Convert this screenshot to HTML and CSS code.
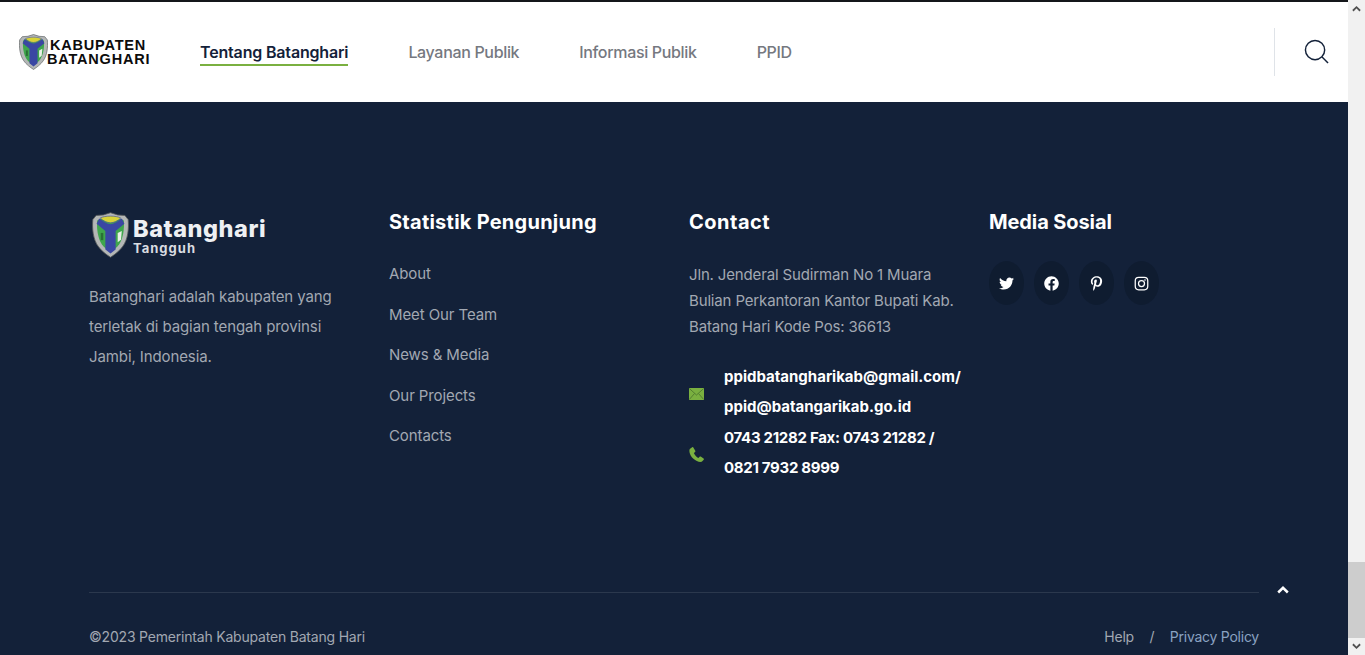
FILE: index.html
```html
<!DOCTYPE html>
<html lang="id">
<head>
<meta charset="utf-8">
<title>Kabupaten Batanghari</title>
<link rel="stylesheet" href="styles.css">
</head>
<body>
<div class="page">
  <div class="main">
    <header class="header">
      <a class="brand">
        <svg class="shield shield-sm" viewBox="0 0 36 44"><use href="#shield"/></svg>
        <span class="brand-text"><span class="b1">KABUPATEN</span><span class="b2">BATANGHARI</span></span>
      </a>
      <nav class="nav">
        <a class="nav-link active">Tentang Batanghari</a>
        <a class="nav-link">Layanan Publik</a>
        <a class="nav-link">Informasi Publik</a>
        <a class="nav-link">PPID</a>
      </nav>
      <div class="search">
        <svg viewBox="0 0 26 26" class="search-icon"><circle cx="11.5" cy="11.5" r="10" /><path d="M18.8 18.8 25 25"/></svg>
      </div>
    </header>
    <footer class="footer">
      <div class="cols">
        <div class="col">
          <div class="flogo">
            <svg class="shield shield-lg" viewBox="0 0 36 44"><use href="#shield"/></svg>
            <div class="flogo-text"><span class="f1">Batanghari</span><span class="f2">Tangguh</span></div>
          </div>
          <p class="about">Batanghari adalah kabupaten yang terletak di bagian tengah provinsi Jambi, Indonesia.</p>
        </div>
        <div class="col">
          <h3 class="title title-wide">Statistik Pengunjung</h3>
          <ul class="links">
            <li>About</li>
            <li>Meet Our Team</li>
            <li>News &amp; Media</li>
            <li>Our Projects</li>
            <li>Contacts</li>
          </ul>
        </div>
        <div class="col">
          <h3 class="title title-contact">Contact</h3>
          <p class="address">Jln. Jenderal Sudirman No 1 Muara Bulian Perkantoran Kantor Bupati Kab. Batang Hari Kode Pos: 36613</p>
          <div class="contact-row">
            <svg class="c-icon c-mail" viewBox="0 0 15 12"><rect width="15" height="12"/><path class="mail-line" d="M.3.5 7.500 7 14.700.5M.3 11.500 5.500 5.500M14.700 11.500 9.500 5.500"/></svg>
            <span>ppidbatangharikab@gmail.com/ ppid@batangarikab.go.id</span>
          </div>
          <div class="contact-row">
            <svg class="c-icon c-phone" viewBox="0 0 16 16"><path d="M3.400.3.800 2C-.600 5.400 1.800 9.900 4.700 12.500c2.800 2.500 6.100 4 8.900 3.300l2.100-2.300c.4-.5.3-1-.2-1.300l-3-2c-.5-.3-.9-.2-1.200.1l-1.300 1.500C8.300 11 6 8.500 5.200 6.300l1.300-1.100c.4-.4.500-.8.200-1.300L4.600.6C4.300.1 3.900 0 3.400.3z"/></svg>
            <span class="phones">0743 21282 Fax: 0743 21282 / 0821 7932 8999</span>
          </div>
        </div>
        <div class="col">
          <h3 class="title">Media Sosial</h3>
          <div class="socials">
            <a class="social"><svg viewBox="0 0 512 512"><path d="M459.37 151.716c.325 4.548.325 9.097.325 13.645 0 138.72-105.583 298.558-298.558 298.558-59.452 0-114.68-17.219-161.137-47.106 8.447.974 16.568 1.299 25.34 1.299 49.055 0 94.213-16.568 130.274-44.832-46.132-.975-84.792-31.188-98.112-72.772 6.498.974 12.995 1.624 19.818 1.624 9.421 0 18.843-1.3 27.614-3.573-48.081-9.747-84.143-51.98-84.143-102.985v-1.299c13.969 7.797 30.214 12.67 47.431 13.319-28.264-18.843-46.781-51.005-46.781-87.391 0-19.492 5.197-37.36 14.294-52.954 51.655 63.675 129.3 105.258 216.365 109.807-1.624-7.797-2.599-15.918-2.599-24.04 0-57.828 46.782-104.934 104.934-104.934 30.213 0 57.502 12.67 76.67 33.137 23.715-4.548 46.456-13.32 66.599-25.34-7.798 24.366-24.366 44.833-46.132 57.827 21.117-2.273 41.584-8.122 60.426-16.243-14.292 20.791-32.161 39.308-52.628 54.253z"/></svg></a>
            <a class="social"><svg viewBox="0 0 512 512"><path d="M504 256C504 119 393 8 256 8S8 119 8 256c0 123.78 90.69 226.38 209.25 245V327.69h-63V256h63v-54.64c0-62.15 37-96.48 93.67-96.48 27.14 0 55.52 4.84 55.52 4.84v61h-31.28c-30.8 0-40.41 19.12-40.41 38.73V256h68.78l-11 71.69h-57.78V501C413.31 482.38 504 379.78 504 256z"/></svg></a>
            <a class="social"><svg viewBox="0 0 384 512"><path d="M204 6.5C101.4 6.500 0 74.900 0 185.600 0 256 39.600 296 63.600 296c9.900 0 15.600-27.600 15.600-35.400 0-9.300-23.700-29.100-23.700-67.800 0-80.400 61.200-137.400 140.400-137.400 68.100 0 118.500 38.700 118.500 109.800 0 53.100-21.300 152.700-90.300 152.700-24.900 0-46.200-18-46.200-43.800 0-37.800 26.400-74.400 26.400-113.400 0-66.200-93.900-54.200-93.900 25.800 0 16.800 2.100 35.400 9.600 50.700-13.800 59.400-42 147.900-42 209.100 0 18.900 2.700 37.500 4.500 56.400 3.400 3.800 1.700 3.400 6.900 1.500 50.400-69 48.600-82.500 71.400-172.800 12.300 23.400 44.100 36 69.300 36 106.200 0 153.900-103.500 153.900-196.800C384 71.300 298.200 6.500 204 6.500z"/></svg></a>
            <a class="social"><svg class="ig" viewBox="0 0 24 24"><rect x="2" y="2" width="20" height="20" rx="5.500"/><circle cx="12" cy="12" r="4.800"/><circle class="ig-dot" cx="17.600" cy="6.400" r="1.300"/></svg></a>
          </div>
        </div>
      </div>
      <div class="bottom">
        <span>©2023 Pemerintah Kabupaten Batang Hari</span>
        <div class="legal"><a>Help</a><span class="sep">/</span><a class="blue">Privacy Policy</a></div>
        <a class="top-btn"><svg viewBox="0 0 12 8"><path d="M1.200 6.500 6 1.800l4.800 4.700"/></svg></a>
      </div>
    </footer>
  </div>
  <aside class="scrollbar">
    <span class="arrow"><svg viewBox="0 0 10 7"><path d="M1 6 5 2l4 4"/></svg></span>
    <div class="track"><div class="thumb"></div></div>
    <span class="arrow"><svg viewBox="0 0 10 7"><path d="M1 1l4 4 4-4"/></svg></span>
  </aside>
</div>
<svg class="defs" width="0" height="0">
  <defs>
    <g id="shield">
      <path d="M18 .3 11 2.500 4 3 .8 7C0 16 1 26 6 33c3 4.500 8 8 12 10.700 4-2.700 9-6.200 12-10.700 5-7 6-17 5.200-26L32 3l-7-.5z" fill="#b4b7b6" stroke="#55595a" stroke-width=".8"/>
      <path d="M18 5C12 5 8 6 5 8 4.500 16 5.500 25 9.500 31c2 3 5.500 5.500 8.500 7 3-1.500 6.500-4 8.500-7 4-6 5-15 4.500-23-3-2-7-3-13-3z" fill="#3fa64d"/>
      <path d="M7 6 4.500 11 13 18v18l5 4 5-4V18l8.500-7L29 6c-4 3-7 5-11 5.500C14 11 11 9 7 6z" fill="#3a47a3"/>
      <path d="M8 5.500C12 3 24 3 28 5.500 25 8.500 21 10 18 10.200 15 10 11 8.500 8 5.500z" fill="#d8d338" stroke="#3a47a3" stroke-width=".6"/>
      <path d="M25 20l4-2-.8 8.500-3.200 2.500z" fill="#e9f0e6"/>
      <path d="M8.500 20h2.500v7H8.500z" fill="#2a7135"/>
    </g>
  </defs>
</svg>
</body>
</html>
```

FILE: styles.css
```css
* { box-sizing: border-box; }
html, body { margin: 0; height: 100%; overflow: hidden; }
body { font-family: Inter, "Liberation Sans", sans-serif; color: #fff; }
a { color: inherit; text-decoration: none; }
.defs { position: absolute; }
.page { display: flex; height: 655px; }
.main { flex: 1; min-width: 0; display: flex; flex-direction: column; }

.header { height: 102px; flex: none; background: #fff; border-top: 2px solid #14161a; display: flex; align-items: center; padding-left: 19px; padding-right: 18px; }
.brand { display: flex; align-items: center; width: 181px; color: #0c0c0c; }
.shield-sm { width: 29px; height: 36px; flex: none; margin-right: 0; }
.brand-text { display: flex; flex-direction: column; font-family: "Liberation Sans", sans-serif; font-weight: 700; font-size: 14.500px; line-height: 14px; white-space: nowrap; margin-left: -1px; }
.b1 { padding-left: 3px; letter-spacing: .8px; }
.b2 { letter-spacing: .8px; }
.nav { display: flex; gap: 60px; flex: 1; padding-top: 2px; }
.nav-link { font-size: 16px; font-weight: 500; color: #75787f; line-height: 24px; letter-spacing: -.33px; }
.nav-link.active { color: #132139; font-weight: 600; border-bottom: 2px solid #7ab040; line-height: 22px; margin-top: 1px; height: 25px; letter-spacing: -.17px; }
.search { width: 56px; height: 48px; border-left: 1px solid #dfe3e8; display: flex; align-items: center; justify-content: flex-end; margin-bottom: 1px; }
.search-icon { width: 25px; height: 25px; fill: none; stroke: #132139; stroke-width: 1.500; margin-right: 1px; }

.footer { flex: 1; background: #132139; padding: 109px 89px 0; position: relative; }
.cols { display: grid; grid-template-columns: repeat(4, 300px); height: 381px; }
.col { min-width: 0; }
.flogo { display: flex; align-items: center; height: 48px; padding-left: 3px; }
.shield-lg { width: 37px; height: 46px; flex: none; }
.flogo-text { display: flex; flex-direction: column; margin: 1px 0 0 4px; font-weight: 800; color: #eef0f3; }
.f1 { font-size: 23.500px; line-height: 25.500px; letter-spacing: .55px; }
.f2 { font-size: 13px; line-height: 14px; letter-spacing: 1px; font-weight: 700; color: #d9dce1; }
.about { margin: 23px 0 0; width: 250px; font-size: 15px; line-height: 30px; color: #a2a8b2; letter-spacing: -.1px; }
.title { margin: -1px 0 0; font-size: 20px; font-weight: 700; line-height: 24px; letter-spacing: -.1px; }
.title-wide { letter-spacing: .25px; }
.title-contact { letter-spacing: .5px; }
.links { list-style: none; margin: 28px 0 0; padding: 0; font-size: 15px; color: #a2a8b2; letter-spacing: -.1px; }
.links li { height: 40.500px; line-height: 24px; }
.address { margin: 28px 0 0; width: 275px; font-size: 15px; line-height: 26px; color: #a2a8b2; letter-spacing: -.15px; }
.contact-row { display: flex; align-items: center; width: 275px; font-size: 15px; font-weight: 700; line-height: 30.300px; }
.address + .contact-row { margin-top: 22px; }
.contact-row span { margin-left: 20px; letter-spacing: 0; }
.contact-row .phones { letter-spacing: -.3px; }
.c-icon { width: 15px; height: 12px; flex: none; fill: #7ab040; margin-top: 4px; }
.c-mail { height: 12px; }
.mail-line { fill: none; stroke: #4f7a2f; stroke-width: .9; }
.c-phone { height: 15px; }
.socials { display: flex; gap: 10px; margin-top: 27px; }
.social { width: 35px; height: 44px; border-radius: 50%; background: #0f1c30; display: flex; align-items: center; justify-content: center; }
.social svg { width: 15px; height: 15px; fill: #fff; }
.social .ig { fill: none; stroke: #fff; stroke-width: 2; }
.social .ig-dot { fill: #fff; stroke: none; }

.bottom { position: relative; width: 1170px; border-top: 1px solid #2b384d; display: flex; justify-content: space-between; align-items: center; height: 60px; padding-top: 28px; font-size: 14px; color: #a2a8b2; letter-spacing: -.2px; }
.legal { display: flex; gap: 15.500px; font-size: 14px; }
.sep { color: #a2a8b2; }
.blue { color: #8aa2c2; letter-spacing: -.25px; }
.top-btn { position: absolute; right: -30px; top: -7px; width: 12px; height: 8px; display: flex; }
.top-btn svg { width: 12px; height: 8px; fill: none; stroke: #fff; stroke-width: 2.500; }

.scrollbar { width: 17px; flex: none; background: #f1f1f1; display: flex; flex-direction: column; }
.arrow { height: 17px; flex: none; display: flex; align-items: center; justify-content: center; }
.arrow svg { width: 9px; height: 7px; fill: none; stroke: #505050; stroke-width: 2; }
.track { flex: 1; display: flex; flex-direction: column; justify-content: flex-end; }
.thumb { height: 76px; background: #cdcdcd; }
```
